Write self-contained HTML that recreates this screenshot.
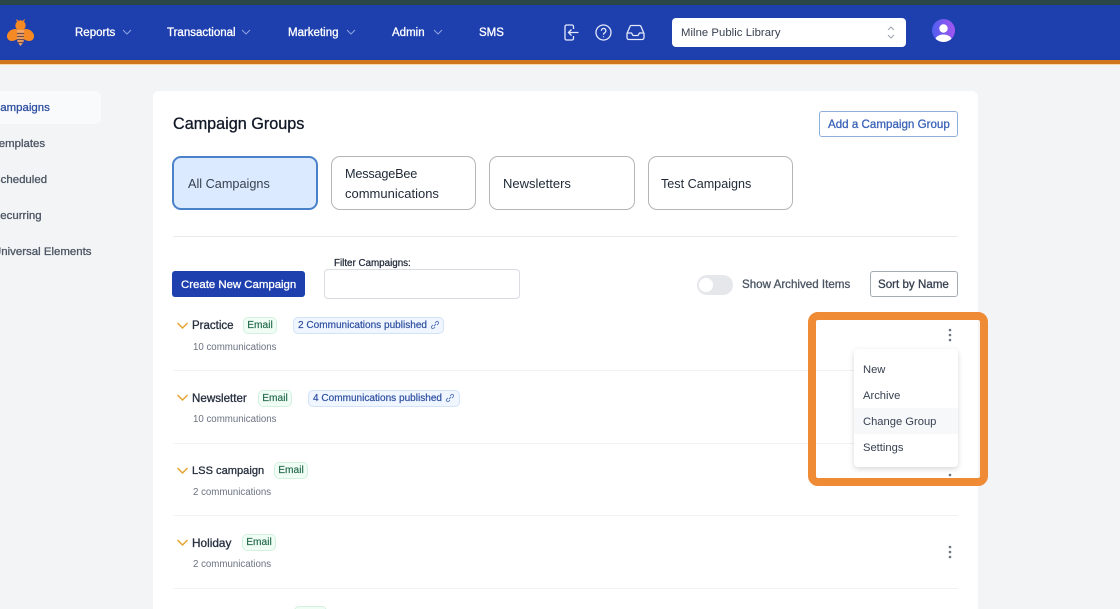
<!DOCTYPE html>
<html style="overflow:hidden;height:609px"><head><meta charset="utf-8"><style>
html,body{margin:0;padding:0}
body{width:1120px;height:609px;overflow:hidden;position:relative;background:#f3f4f6;font-family:"Liberation Sans",sans-serif}
div{position:absolute;box-sizing:border-box}
#w{left:0;top:0;width:1120px;height:609px;overflow:hidden}
.t{white-space:nowrap;line-height:16px}
.nav{color:#fff;font-size:11.5px;top:25px;-webkit-text-stroke:.3px #fff}
.side{font-size:11.45px;color:#4b5563;-webkit-text-stroke:.3px #4b5563}
.tab{border:1px solid #b5b5b5;border-radius:9px;top:156px;height:54px;background:#fff}
.tt{font-size:13px;color:#1f2937}
.name{font-size:11.5px;color:#27303f;-webkit-text-stroke:.3px #27303f}
.sub{font-size:9.7px;color:#6b7280;left:193px}
.em{height:17px;border:1px solid #d5f0e0;border-radius:5px;background:#f0fdf4;color:#22694a;font-size:10.2px;text-align:center;line-height:15px;-webkit-text-stroke:.15px #22694a}
.pub{height:17px;border:1px solid #d3e2f5;border-radius:5px;background:#eff6ff;color:#2f4fa0;font-size:10.05px;line-height:15px;white-space:nowrap;padding-left:4px;-webkit-text-stroke:.2px #2f4fa0}
.hr{left:173px;width:785px;height:1px;background:#f1f2f4}
.m{font-size:11.2px;color:#374151;left:863px}
svg{position:absolute}
</style></head><body><div id="w">
<div style="left:0;top:0;width:1120px;height:5px;background:#2b4646"></div>
<div style="left:0;top:5px;width:1120px;height:55px;background:#1e3fae"></div>
<div style="left:0;top:60px;width:1120px;height:4px;background:#d0771d"></div>
<div style="left:0;top:64px;width:1120px;height:1px;background:#fbd9a8"></div>

<svg style="left:5px;top:18px" width="30" height="30" viewBox="0 0 30 30">
<ellipse cx="8.500" cy="17" rx="7" ry="5.500" fill="#f58a25" transform="rotate(-35 8.500 17)"/>
<ellipse cx="22.500" cy="17" rx="7" ry="5.500" fill="#f58a25" transform="rotate(35 22.500 17)"/>
<circle cx="15.500" cy="7.500" r="5.200" fill="#f58a25"/>
<path d="M11.500 1.500L13 4M19.500 1.500L18 4" stroke="#f58a25" stroke-width="1.200"/>
<path d="M11.800 12h7.400l-.6 12-3.100 4-3.100-4z" fill="#f5a667"/>
<path d="M11.800 15.500h7.400M12 18.500h7M12.200 21.500h6.600M12.500 24.500h6" stroke="#6b4a4a" stroke-width="1.300"/>
</svg>

<div class="t nav" style="left:75px">Reports</div>
<div class="t nav" style="left:167px">Transactional</div>
<div class="t nav" style="left:288px">Marketing</div>
<div class="t nav" style="left:392px">Admin</div>
<div class="t nav" style="left:479px">SMS</div>
<svg style="left:122px;top:29px" width="10" height="7" fill="none" stroke="#8fa2e0" stroke-width="1"><path d="M1 1l4 4 4-4"/></svg>
<svg style="left:241px;top:29px" width="10" height="7" fill="none" stroke="#8fa2e0" stroke-width="1"><path d="M1 1l4 4 4-4"/></svg>
<svg style="left:346px;top:29px" width="10" height="7" fill="none" stroke="#8fa2e0" stroke-width="1"><path d="M1 1l4 4 4-4"/></svg>
<svg style="left:433px;top:29px" width="10" height="7" fill="none" stroke="#8fa2e0" stroke-width="1"><path d="M1 1l4 4 4-4"/></svg>

<svg style="left:563px;top:24px" width="17" height="18" fill="none" stroke="#e3e9fb" stroke-width="1.300"><path d="M10.500 5V2.500a1.500 1.500 0 0 0-1.500-1.500H3.500A1.500 1.500 0 0 0 2 2.500v12A1.500 1.500 0 0 0 3.500 16H9a1.500 1.500 0 0 0 1.500-1.500V12"/><path d="M15.500 8.500H6M8.500 5.500l-3 3 3 3"/></svg>
<svg style="left:595px;top:24px" width="17" height="17" fill="none" stroke="#e3e9fb" stroke-width="1.300"><circle cx="8.500" cy="8.500" r="7.500"/><path d="M6.300 6.700a2.300 2.300 0 1 1 3.500 2c-.8.500-1.300 1-1.300 2"/><path d="M8.500 12.300v1"/></svg>
<svg style="left:626px;top:24px" width="19" height="17" fill="none" stroke="#e3e9fb" stroke-width="1.300"><path d="M1 9.500L4 2.500a1.500 1.500 0 0 1 1.400-1h8.200a1.500 1.500 0 0 1 1.400 1l3 7v4a2 2 0 0 1-2 2H3a2 2 0 0 1-2-2z"/><path d="M1 9h4.500l1.500 2.500h5L13.500 9H18"/></svg>

<div style="left:672px;top:18px;width:234px;height:29px;background:#fff;border-radius:4px"></div>
<div class="t" style="left:681px;top:25px;font-size:11.300px;letter-spacing:.05px;color:#374151">Milne Public Library</div>
<svg style="left:886px;top:25px" width="10" height="15" fill="none" stroke="#9ca3af" stroke-width="1"><path d="M2 5l3-3 3 3M2 10l3 3 3-3"/></svg>

<svg style="left:932px;top:19px" width="23" height="23" viewBox="0 0 23 23"><defs><linearGradient id="g" x1="0" x2="1"><stop offset="0" stop-color="#4f5ff0"/><stop offset="1" stop-color="#a355f0"/></linearGradient><clipPath id="c"><circle cx="11.500" cy="11.500" r="11.500"/></clipPath></defs><circle cx="11.500" cy="11.500" r="11.500" fill="url(#g)"/><g clip-path="url(#c)" fill="#fff"><circle cx="11.500" cy="9.500" r="4.200"/><ellipse cx="11.500" cy="20.500" rx="8" ry="5"/></g></svg>

<div style="left:-10px;top:91px;width:111px;height:33px;background:#f9fafc;border-radius:6px"></div>
<div class="t side" style="top:100px;color:#2f4fa0;-webkit-text-stroke-color:#2f4fa0;left:-8px">Campaigns</div>
<div class="t side" style="top:136px;left:-7px">Templates</div>
<div class="t side" style="top:172px;left:-7px">Scheduled</div>
<div class="t side" style="top:208px;left:-8px">Recurring</div>
<div class="t side" style="top:244px;left:-7px">Universal Elements</div>

<div style="left:153px;top:91px;width:825px;height:530px;background:#fff;border-radius:6px"></div>
<div class="t" style="left:173px;top:116px;font-size:16.200px;color:#111827;-webkit-text-stroke:.3px #111827">Campaign Groups</div>

<div style="left:819px;top:111px;width:139px;height:26px;border:1px solid #8fafd8;border-radius:3px"></div>
<div class="t" style="left:828px;top:117px;font-size:11.600px;color:#3b63b8;-webkit-text-stroke:.3px #3b63b8">Add a Campaign Group</div>

<div class="tab" style="left:172px;width:146px;background:#dbeafe;border:2px solid #4a82c9"></div>
<div class="t tt" style="left:188px;top:176px;color:#374151;font-size:12.700px">All Campaigns</div>
<div class="tab" style="left:331px;width:145px"></div>
<div class="t tt" style="left:345px;top:166px;font-size:12.700px;letter-spacing:-.2px">MessageBee</div>
<div class="t tt" style="left:345px;top:186px">communications</div>
<div class="tab" style="left:489px;width:146px"></div>
<div class="t tt" style="left:503px;top:176px">Newsletters</div>
<div class="tab" style="left:648px;width:145px"></div>
<div class="t tt" style="left:661px;top:176px;font-size:12.600px">Test Campaigns</div>

<div class="hr" style="top:236px;background:#e9eaec"></div>

<div style="left:172px;top:271px;width:133px;height:26px;background:#1e3fae;border-radius:3px"></div>
<div class="t" style="left:181px;top:277px;font-size:11.400px;color:#fff;-webkit-text-stroke:.3px #fff">Create New Campaign</div>
<div class="t" style="left:334px;top:256px;font-size:9.800px;color:#1f2937;-webkit-text-stroke:.25px #1f2937">Filter Campaigns:</div>
<div style="left:324px;top:269px;width:196px;height:30px;border:1px solid #d9dce1;border-radius:4px;background:#fff"></div>

<div style="left:697px;top:275px;width:36px;height:20px;border-radius:10px;background:#e5e7eb"></div>
<div style="left:699px;top:278px;width:14px;height:14px;border-radius:50%;background:#fff"></div>
<div class="t" style="left:742px;top:277px;font-size:11.600px;color:#4b5563;-webkit-text-stroke:.3px #4b5563">Show Archived Items</div>
<div style="left:870px;top:271px;width:88px;height:26px;border:1px solid #a5abb5;border-radius:3px"></div>
<div class="t" style="left:878px;top:277px;font-size:11.600px;color:#374151;-webkit-text-stroke:.3px #374151">Sort by Name</div>

<svg style="left:176px;top:322px" width="13" height="8" fill="none" stroke="#e5a32e" stroke-width="1.500"><path d="M1.500 1l5 5 5-5"/></svg>
<div class="t name" style="left:192px;top:318px">Practice</div>
<div class="em" style="left:243px;top:317px;width:34px">Email</div>
<div class="pub" style="left:293px;top:317px;width:151px">2 Communications published</div>
<svg style="left:430px;top:320px" width="10" height="10" fill="none" stroke="#5b76b5" stroke-width=".9"><path d="M4 6l2-2M3 5L1.800 6.200a1.400 1.400 0 0 0 2 2L5 7M5 3l1.200-1.200a1.400 1.400 0 0 1 2 2L7 5"/></svg>
<div class="t sub" style="top:340px">10 communications</div>
<div class="hr" style="top:370px"></div>

<svg style="left:176px;top:394px" width="13" height="8" fill="none" stroke="#e5a32e" stroke-width="1.500"><path d="M1.500 1l5 5 5-5"/></svg>
<div class="t name" style="left:192px;top:391px;font-size:11.600px">Newsletter</div>
<div class="em" style="left:258px;top:390px;width:34px">Email</div>
<div class="pub" style="left:308px;top:390px;width:152px">4 Communications published</div>
<svg style="left:445px;top:393px" width="10" height="10" fill="none" stroke="#5b76b5" stroke-width=".9"><path d="M4 6l2-2M3 5L1.800 6.200a1.400 1.400 0 0 0 2 2L5 7M5 3l1.200-1.200a1.400 1.400 0 0 1 2 2L7 5"/></svg>
<div class="t sub" style="top:412px">10 communications</div>
<div class="hr" style="top:443px"></div>

<svg style="left:176px;top:467px" width="13" height="8" fill="none" stroke="#e5a32e" stroke-width="1.500"><path d="M1.500 1l5 5 5-5"/></svg>
<div class="t name" style="left:192px;top:463px;font-size:11.100px">LSS campaign</div>
<div class="em" style="left:274px;top:462px;width:34px">Email</div>
<div class="t sub" style="top:485px">2 communications</div>
<div class="hr" style="top:515px"></div>

<svg style="left:176px;top:539px" width="13" height="8" fill="none" stroke="#e5a32e" stroke-width="1.500"><path d="M1.500 1l5 5 5-5"/></svg>
<div class="t name" style="left:192px;top:535px;font-size:11.800px">Holiday</div>
<div class="em" style="left:242px;top:534px;width:34px">Email</div>
<div class="t sub" style="top:557px">2 communications</div>
<div class="hr" style="top:588px"></div>
<div class="em" style="left:294px;top:606px;width:33px"></div>

<svg style="left:947px;top:328px" width="6" height="14" fill="#6b7280"><circle cx="3" cy="2" r="1.300"/><circle cx="3" cy="7" r="1.300"/><circle cx="3" cy="12" r="1.300"/></svg>
<svg style="left:947px;top:545px" width="6" height="14" fill="#6b7280"><circle cx="3" cy="2" r="1.300"/><circle cx="3" cy="7" r="1.300"/><circle cx="3" cy="12" r="1.300"/></svg>
<svg style="left:947px;top:473px" width="6" height="6" fill="#6b7280"><circle cx="3" cy="2" r="1.300"/></svg>

<div style="left:854px;top:349px;width:104px;height:118px;background:#fff;border-radius:4px;box-shadow:0 2px 6px rgba(0,0,0,.16)"></div>
<div style="left:854px;top:408px;width:104px;height:26px;background:#f7f8fa"></div>
<div class="t m" style="top:362px">New</div>
<div class="t m" style="top:388px">Archive</div>
<div class="t m" style="top:414px">Change Group</div>
<div class="t m" style="top:440px">Settings</div>

<div style="left:808px;top:312px;width:180px;height:174px;border:8px solid #ef8a35;border-radius:10px"></div>
</div></body></html>
